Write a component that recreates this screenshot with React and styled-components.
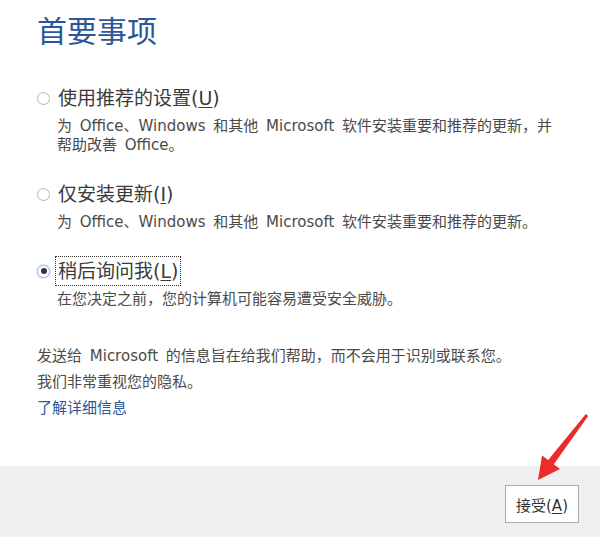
import React from 'react';
import styled, { createGlobalStyle } from 'styled-components';

const GlobalStyle = createGlobalStyle`
  html, body {
    margin: 0;
    padding: 0;
    background: #ffffff;
  }
  body {
    font-family: "DejaVu Sans", "Noto Sans CJK SC", sans-serif;
    color: #333333;
  }
`

const Page = styled.div`
  position: relative;
  width: 600px;
  height: 537px;
  display: flex;
  flex-direction: column;
  overflow: hidden;
`

const Content = styled.div`
  flex: 1;
  padding: 9px 37px 0 37px;
`

const Title = styled.h1`
  margin: 0 0 36px 0;
  font-family: "Noto Sans CJK SC", sans-serif;
  font-size: 30px;
  line-height: 40px;
  font-weight: 400;
  color: #2b579a;
`

const Options = styled.div`
  display: flex;
  flex-direction: column;
  gap: 26px;
`

const Option = styled.div`
  display: flex;
  flex-direction: column;
`

const Row = styled.label`
  display: flex;
  align-items: center;
  gap: 7px;
  height: 26px;
`

const Radio = styled.span`
  box-sizing: border-box;
  width: 13px;
  height: 13px;
  border-radius: 50%;
  border: 1px solid ${p => (p.checked ? '#a9c1e0' : '#b4b4b4')};
  box-shadow: ${p => (p.checked ? '0 0 0 1px #d6e3f3' : 'none')};
  background: #ffffff;
  display: flex;
  align-items: center;
  justify-content: center;
  flex-shrink: 0;
  &::after {
    content: '';
    width: 6px;
    height: 6px;
    border-radius: 50%;
    background: ${p => (p.checked ? '#333333' : 'transparent')};
  }
`

const Label = styled.span`
  font-size: 19px;
  line-height: 26px;
  color: #3a3a3a;
  padding: 0 1px;
  outline: ${p => (p.focused ? '1px dotted #333333' : 'none')};
  outline-offset: 1px;
  u {
    text-decoration-thickness: 1px;
    text-underline-offset: 2px;
  }
`

const Description = styled.p`
  margin: 6px 0 0 20px;
  font-size: 15px;
  line-height: 19px;
  color: #4a4a4a;
  word-spacing: 3px;
`

const Privacy = styled.div`
  margin-top: 34px;
  display: flex;
  flex-direction: column;
`

const Note = styled.p`
  margin: 0;
  font-size: 15px;
  line-height: 26px;
  color: #4a4a4a;
  word-spacing: 3px;
`

const Link = styled.a`
  font-size: 15px;
  line-height: 26px;
  color: #2b579a;
  text-decoration: none;
`

const Footer = styled.div`
  height: 71px;
  background: #f0f0f0;
  display: flex;
  justify-content: flex-end;
  align-items: flex-start;
  padding: 19px 21px 0 0;
  box-sizing: border-box;
`

const Button = styled.button`
  width: 74px;
  height: 38px;
  background: #ffffff;
  border: 1px solid #adadad;
  font-family: inherit;
  font-size: 15px;
  color: #333333;
  padding: 0;
  u {
    text-decoration-thickness: 1px;
    text-underline-offset: 2px;
  }
`

const Arrow = styled.svg`
  position: absolute;
  left: 0;
  top: 0;
  pointer-events: none;
`

const options = [
  {
    label: '使用推荐的设置',
    key: 'U',
    desc: '为 Office、Windows 和其他 Microsoft 软件安装重要和推荐的更新，并帮助改善 Office。',
  },
  {
    label: '仅安装更新',
    key: 'I',
    desc: '为 Office、Windows 和其他 Microsoft 软件安装重要和推荐的更新。',
  },
  {
    label: '稍后询问我',
    key: 'L',
    desc: '在您决定之前，您的计算机可能容易遭受安全威胁。',
    checked: true,
  },
]

function App() {
  return (
    <Page>
      <GlobalStyle />
      <Content>
        <Title>首要事项</Title>
        <Options>
          {options.map(o => (
            <Option key={o.key}>
              <Row>
                <Radio checked={o.checked} />
                <Label focused={o.checked}>
                  {o.label}(<u>{o.key}</u>)
                </Label>
              </Row>
              <Description>
                {o.key === 'U' ? (
                  <>为 Office、Windows 和其他 Microsoft 软件安装重要和推荐的更新，并<br />帮助改善 Office。</>
                ) : o.desc}
              </Description>
            </Option>
          ))}
        </Options>
        <Privacy>
          <Note>发送给 Microsoft 的信息旨在给我们帮助，而不会用于识别或联系您。</Note>
          <Note>我们非常重视您的隐私。</Note>
          <Link href="#">了解详细信息</Link>
        </Privacy>
      </Content>
      <Footer>
        <Button>接受(<u>A</u>)</Button>
      </Footer>
      <Arrow width="600" height="537" viewBox="0 0 600 537">
        <polygon
          points="588.2,416 553.8,464.2 560,469 538,480 542,455.5 548.2,460 585.8,414"
          fill="#ee2b2b"
        />
      </Arrow>
    </Page>
  );
}

export default App;
